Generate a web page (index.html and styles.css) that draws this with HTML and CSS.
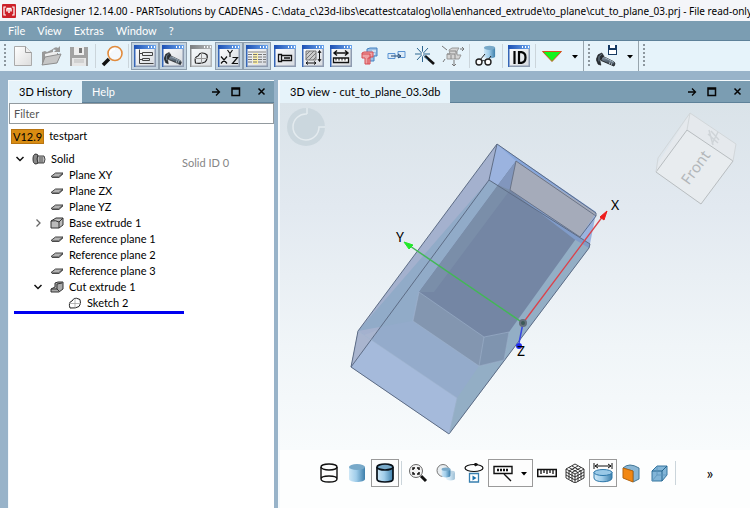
FILE: index.html
```html
<!DOCTYPE html>
<html lang="en">
<head>
<meta charset="utf-8">
<title>PARTdesigner</title>
<link rel="stylesheet" href="styles.css">
</head>
<body>
<svg class="defs" aria-hidden="true">
  <defs>
    <linearGradient id="g-page" x1="0" y1="0" x2="1" y2="1"><stop offset="0" stop-color="#fff"/><stop offset="1" stop-color="#dcdcdc"/></linearGradient>
    <linearGradient id="g-title" x1="0" y1="0" x2="1" y2="0"><stop offset="0" stop-color="#1c50b4"/><stop offset="1" stop-color="#6fa8ee"/></linearGradient>
    <linearGradient id="g-body" x1="0" y1="0" x2="1" y2="1"><stop offset="0" stop-color="#fff"/><stop offset="1" stop-color="#d5d9df"/></linearGradient>
    <linearGradient id="g-cyl" x1="0" y1="0" x2="1" y2="0"><stop offset="0" stop-color="#cfe8f7"/><stop offset=".45" stop-color="#a0cdea"/><stop offset="1" stop-color="#3d7fab"/></linearGradient>
    <linearGradient id="g-sky" x1="0" y1="0" x2="0" y2="1"><stop offset="0" stop-color="#dae3e9"/><stop offset=".3" stop-color="#e2e9f0"/><stop offset=".7" stop-color="#f0f5f8"/><stop offset="1" stop-color="#f8fbfc"/></linearGradient>
    <linearGradient id="g-bolt" x1="0" y1="0" x2="0" y2="1"><stop offset="0" stop-color="#93a3b3"/><stop offset="1" stop-color="#26303a"/></linearGradient>
    <symbol id="win" viewBox="0 0 22 22">
      <rect x=".5" y=".5" width="21" height="21" fill="url(#g-body)" stroke="#6a87b5"/>
      <path d="M0 0h22v4H0z" fill="url(#g-title)"/><path d="M0 4h1.500v18H0z" fill="#3566b8"/><path d="M20.500 4h1.500v18h-1.500zM1.500 20.500h19v1.500h-19z" fill="#8e9bb0"/>
      <path d="M14 1h1v2h-1zM17 1h1v2h-1zM20 1h1v2h-1z" fill="#fff"/>
    </symbol>
    <symbol id="bolt" viewBox="0 0 22 16">
      <path d="M6 4l13 6.500q2 2 0 4.500L5 9z" fill="url(#g-bolt)" stroke="#111" stroke-width=".8"/>
      <path d="M9 6l10 5" stroke="#a9bccb"/><path d="M15 10l-1 3M17 11l-1 3" stroke="#dce7ef" stroke-width=".7"/>
      <path d="M6 1L2 3 0 8l2 5 3 1-1-5 4-5z" fill="#2a3036" stroke="#111" stroke-width=".6"/><path d="M6 2L3 5v5" fill="none" stroke="#7b8d9b"/>
    </symbol>
    <symbol id="plane" viewBox="0 0 14 8"><path d="M1 5.500L5.500 2h7.500L8.500 6H2.500z" fill="#b2b2b2" stroke="#444"/><path d="M2 6.500h7L13 3" fill="none" stroke="#333" stroke-width=".8"/></symbol>
    <symbol id="sketch" viewBox="0 0 14 12"><path d="M2 11Q0 5 4 4L6 1.500Q8 .5 12 2.500Q13.500 7 11 9.500Q8 11.500 2 11z" fill="#fff" stroke="#222"/><path d="M1 6.500h12M7 1v10" stroke="#999" stroke-width=".7"/></symbol>
    <symbol id="cyl" viewBox="0 0 20 20"><path d="M2 4v12c0 4 16 4 16 0V4z" fill="url(#g-cyl)"/><ellipse cx="10" cy="4" rx="8" ry="3" fill="#78a9c9"/></symbol>
    <symbol id="down" viewBox="0 0 12 7"><path d="M2.500 1.500L6 5l3.500-3.500" fill="none" stroke="#111" stroke-width="1.500"/></symbol>
    <symbol id="pin" viewBox="0 0 10 10"><path d="M1 5h7M5 1.500L8.500 5 5 8.500" fill="none" stroke="#050505" stroke-width="1.300"/></symbol>
    <symbol id="max" viewBox="0 0 10 10"><path d="M1 1h7.500v7.500H1zM1 2h7.500" fill="none" stroke="#050505" stroke-width="1.500"/></symbol>
    <symbol id="close" viewBox="0 0 10 10"><path d="M1.500 1.500l6 6M7.500 1.500l-6 6" stroke="#050505" stroke-width="1.500"/></symbol>
    <symbol id="caret" viewBox="0 0 8 5"><path d="M1 1h6L4 4.500z" fill="#000"/></symbol>
  </defs>
</svg>

<div class="app">
  <header class="title">
    <svg class="logo" viewBox="0 0 14 14"><rect width="14" height="14" rx="1" fill="#cc2029"/><path d="M4 3H2v8h2M10 3h2v8h-2" fill="none" stroke="#fff" stroke-width="1.200"/><path d="M4.500 4.500h5M7 5v4M5 5v2.500M9 5v2.500" stroke="#fff" stroke-width="1.500"/></svg>
    <span>PARTdesigner 12.14.00 - PARTsolutions by CADENAS - C:\data_c\23d-libs\ecattestcatalog\olla\enhanced_extrude\to_plane\cut_to_plane_03.prj - File read-only</span>
  </header>
  <nav class="menu">
    <button>File</button><button>View</button><button>Extras</button><button>Window</button><button>?</button>
  </nav>
  <div class="toolbar">
    <i class="grip"></i>
    <button aria-label="New"><svg viewBox="0 0 22 22"><path d="M2.500 1.500h11l6 6v13h-17z" fill="url(#g-page)" stroke="#aaa"/><path d="M13.500 1.500v6h6" fill="#eee" stroke="#999"/></svg></button>
    <button aria-label="Open"><svg viewBox="0 0 22 22"><path d="M2 20V7l3-1 2 1 6-3v4h5v3z" fill="#999"/><path d="M5 9l12-3v8H5z" fill="#eee"/><path d="M2 20l3-8 16-3-4 9z" fill="#c6c6c6" stroke="#8d8d8d"/><path d="M12 5q3-4 6-2l2-2v6h-6l2-2q-2-1-4 0z" fill="#999"/></svg></button>
    <button aria-label="Save"><svg viewBox="0 0 22 22"><path d="M2 2h18v19H2z" fill="#a2a2a2"/><path d="M6 2h10v8H6z" fill="#eee"/><path d="M11 3h3v5h-3z" fill="#777"/><path d="M4 13h14v8H4z" fill="#e6e6e6"/><path d="M6 15h10M6 17h10" stroke="#bbb"/></svg></button>
    <i class="sep"></i>
    <button aria-label="Search"><svg viewBox="0 0 22 22"><path d="M2 20l6-6" stroke="#111" stroke-width="3.500"/><path d="M8 14l2-2" stroke="#aaa" stroke-width="2"/><circle cx="14" cy="8.500" r="7" fill="#f4f8fc" stroke="#e18b3c" stroke-width="1.600"/><path d="M9 8q1-4 5-4" fill="none" stroke="#fff" stroke-width="2"/></svg></button>
    <i class="sep"></i>
    <button class="on" aria-label="History"><svg viewBox="0 0 22 22"><use href="#win"/><path d="M5.500 4.500v14h14M5.500 8.500h3M5.500 14.500h3M8.500 7.500h10v3h-10zM8.500 13.500h7v2h-7z" fill="none" stroke="#444"/></svg></button>
    <button class="on" aria-label="3D view"><svg viewBox="0 0 22 22"><use href="#win"/><use href="#bolt" x="2" y="6" width="19" height="15"/></svg></button>
    <button aria-label="Sketch"><svg viewBox="0 0 22 22"><g class="mono"><use href="#win"/></g><path d="M5.500 18Q4 12 8 11L10 8.500Q14 7 17 10Q18 14 15 17Q11 19 5.500 18z" fill="none" stroke="#222" stroke-width="1.200"/><path d="M5 13.500h13M11.500 7v12" stroke="#999"/></svg></button>
    <button class="on" aria-label="Variables"><svg viewBox="0 0 22 22"><use href="#win"/><path d="M3 11.500l6 7M9 11.500l-6 7M9.500 5l2.500 3.500L14.500 5M12 8v4M14.500 12.500h5l-5 6h5.500" fill="none" stroke="#111" stroke-width="1.200"/></svg></button>
    <button class="on" aria-label="Table"><svg viewBox="0 0 22 22"><use href="#win"/><path d="M7 8h5v11H7z" fill="#fff2a8"/><path d="M2 6h18v2H2z" fill="#bbb"/><path d="M2 9.500h18M2 12h18M2 14.500h18M2 17h18" stroke="#777" stroke-dasharray="4 1"/></svg></button>
    <button aria-label="Part"><svg viewBox="0 0 22 22"><use href="#win"/><path d="M4.500 9.500h3v7h-3zM7.500 10.500h10v5h-10zM10 13h6" fill="none" stroke="#111" stroke-width="1.300"/></svg></button>
    <button aria-label="Section"><svg viewBox="0 0 22 22"><use href="#win"/><path d="M4 6h10v9H4z" fill="#ccc" stroke="#777"/><path d="M4 10l4-4M4 14l8-8M7 15l7-7M11 15l3-3" stroke="#777"/><path d="M17.500 6v10M16 8l1.500-2.500L19 8M16 14l1.500 2.500L19 14M4 18h10M6 16.500L4 18l2 1.500M12 16.500l2 1.500-2 1.500" fill="none" stroke="#111"/></svg></button>
    <button aria-label="Measure"><svg viewBox="0 0 22 22"><use href="#win"/><path d="M4 8h14M7 5.500L4 8l3 2.500M15 5.500L18 8l-3 2.500" fill="none" stroke="#111" stroke-width="1.400"/><path d="M3.500 13h15v4.500h-15z" fill="#fff" stroke="#111" stroke-width="1.300"/><path d="M6 13v2.500M9 13v2.500M12 13v2.500M15 13v2.500" stroke="#111"/></svg></button>
    <button aria-label="Combine"><svg viewBox="0 0 22 22"><path d="M9 4l3-1h7v8h-3v5H9z" fill="#9cc0e4" stroke="#4481c2"/><path d="M14 6h4M13 9h4" stroke="#fff"/><path d="M4 8l2-1h9v5h-3v7H7v-6H4z" fill="#eda2a5" stroke="#d74a50"/><path d="M4 9h8v4h-2v6" fill="none" stroke="#d74a50"/></svg></button>
    <button aria-label="Connect"><svg viewBox="0 0 22 22"><path d="M2 8.500h7v5H2zM12 6.500h7v6h-7z" fill="#dcebf8" stroke="#5a93d2"/><path d="M5 11h10M12 9l3 2-3 2" fill="none" stroke="#25466c"/></svg></button>
    <button aria-label="Wizard"><svg viewBox="0 0 22 22"><path d="M11 11l9 8" stroke="#111" stroke-width="2.600"/><path d="M8.500 1v16M1 9h15M3 3l11 12M14 3L3 15" stroke="#2d6690"/><path d="M8.500 6l1 3-1 3-1-3z" fill="#fff"/></svg></button>
    <button aria-label="Assembly"><svg viewBox="0 0 22 22"><path d="M7 5l3-2h7l-2 3v4h4l-2 4H5V9h3z" fill="#d5d5d5" stroke="#999"/><path d="M5 9h8v5M8 6h6v3M9 10v4" fill="none" stroke="#888"/><path d="M0 1l5 4M18 4h4M12 15v6M20 2l2 2-2 2M10 19l2 2 2-2M3 14l-2 3" fill="none" stroke="#777"/></svg></button>
    <i class="sep"></i>
    <button aria-label="Inspect"><svg viewBox="0 0 22 22"><use href="#cyl" x="7" y="0" width="15" height="14"/><path d="M5 15l5-6M13 15l3-4" stroke="#222"/><circle cx="4" cy="17" r="3" fill="#fff" stroke="#222" stroke-width="1.400"/><circle cx="13" cy="17" r="3" fill="#fff" stroke="#222" stroke-width="1.400"/><path d="M7 16q1.500-1 3 0" fill="none" stroke="#222"/></svg></button>
    <i class="sep"></i>
    <button aria-label="ID"><svg viewBox="0 0 22 22"><use href="#win"/><path d="M6.500 6v13M11 7.200v10.600h2.500q4-.5 4-5.300t-4-5.300z" fill="none" stroke="#050505" stroke-width="2.200"/></svg></button>
    <i class="sep"></i>
    <button aria-label="Update"><svg viewBox="0 0 22 22"><path d="M1.500 6.500h19L11 16.500z" fill="#13f51b" stroke="#d9501d"/></svg></button>
    <button class="drop" aria-label="Update options"><svg class="caret"><use href="#caret"/></svg></button>
    <i class="rule"></i><i class="grip"></i>
    <button aria-label="Save part"><svg viewBox="0 0 22 22"><use href="#bolt" x="0" y="7" width="21" height="15"/><path d="M12 0h9v10h-9z" fill="#173a62"/><path d="M14 0h5v3h-5zM13 5h7v4h-7z" fill="#fff"/></svg></button>
    <button class="drop" aria-label="Save options"><svg class="caret"><use href="#caret"/></svg></button>
    <i class="rule"></i><i class="grip"></i>
  </div>

  <main class="docks">
    <section class="dock history">
      <div class="tabs">
        <button class="tab active">3D History</button><button class="tab">Help</button>
        <span class="ctl"><button aria-label="Pin"><svg><use href="#pin"/></svg></button><button aria-label="Maximize"><svg><use href="#max"/></svg></button><button class="far" aria-label="Close"><svg><use href="#close"/></svg></button></span>
      </div>
      <input class="filter" type="text" placeholder="Filter" aria-label="Filter">
      <p class="part"><b>V12.9</b>testpart</p>
      <div class="solid">
        <ul class="tree">
          <li><svg class="arrow"><use href="#down"/></svg><svg class="ico" viewBox="0 0 14 12"><path d="M5 3h7q2 3 0 7H5z" fill="#bbb" stroke="#444"/><path d="M8 4v6M10 4v6" stroke="#555"/><path d="M4 1Q1 1 1 6t3 5l2-1Q4 6 6 2z" fill="#888" stroke="#333"/></svg>Solid</li>
          <li class="l2"><svg class="ico"><use href="#plane"/></svg>Plane XY</li>
          <li class="l2"><svg class="ico"><use href="#plane"/></svg>Plane ZX</li>
          <li class="l2"><svg class="ico"><use href="#plane"/></svg>Plane YZ</li>
          <li class="l1"><svg class="arrow" viewBox="0 0 12 8"><path d="M4.500 .5L8 4 4.500 7.500" fill="none" stroke="#666" stroke-width="1.300"/></svg><svg class="ico" viewBox="0 0 14 12"><path d="M1 4l5-3h7v7l-4 3H1z" fill="#bbb" stroke="#333"/><path d="M1 4q5-1 8 1l4-4M9 5v6" fill="none" stroke="#333"/></svg>Base extrude 1</li>
          <li class="l2"><svg class="ico"><use href="#plane"/></svg>Reference plane 1</li>
          <li class="l2"><svg class="ico"><use href="#plane"/></svg>Reference plane 2</li>
          <li class="l2"><svg class="ico"><use href="#plane"/></svg>Reference plane 3</li>
          <li class="l1"><svg class="arrow"><use href="#down"/></svg><svg class="ico" viewBox="0 0 14 12"><path d="M1 8l4-2V2l3-1h5v7l-4 3H1z" fill="#aaa" stroke="#333"/><path d="M1 8h6V3l5-1M7 8l2 2" fill="none" stroke="#333"/></svg>Cut extrude 1</li>
          <li class="l3"><svg class="ico"><use href="#sketch"/></svg>Sketch 2</li>
        </ul>
        <span class="sid">Solid ID 0</span>
      </div>
    </section>

    <section class="dock view">
      <div class="tabs">
        <button class="tab active">3D view - cut_to_plane_03.3db</button>
        <span class="ctl"><button aria-label="Pin"><svg><use href="#pin"/></svg></button><button aria-label="Maximize"><svg><use href="#max"/></svg></button><button class="far" aria-label="Close"><svg><use href="#close"/></svg></button></span>
      </div>
      <svg class="scene" viewBox="280 103 470 347" preserveAspectRatio="xMidYMid slice">
        <rect x="0" y="103" width="1200" height="347" fill="url(#g-sky)"/>
        <circle cx="306" cy="127" r="19" fill="#cbd7de"/><path d="M307 114a13 13 0 1 0 12 13h6M307 108v6" fill="none" stroke="#e4ebef" stroke-width="1.500"/>
        <path d="M690 113l46 31-3 17-32 43-45-32 2-9z" fill="#e5e9ed"/><path d="M687 130l46 31-32 43-45-32z" fill="#e8ecef" stroke="#b8bdc0"/><path d="M687 130l3-17 46 31-3 17M690 113l-32 45-2 14" fill="none" stroke="#d2d7da"/><path d="M708 134l10 9M709 130l4 15M718 132l-6 12M711 131l8 9" stroke="#cfd4d8" stroke-width="1.500"/>
        <text class="front" transform="translate(695 167) rotate(-54)" text-anchor="middle" y="6">Front</text>
        <path d="M497 144l-139 187-7 36L489 180z" fill="#a4b1ce"/>
        <path d="M497 144l99 69-6 31-101-64z" fill="#9bb3df"/>
        <path d="M489 180l101 64-1 4-140 186-98-67z" fill="#94abcb"/>
        <path d="M498 185l-80 107-6 29-54 10L489 180z" fill="#91abc8"/>
        <path d="M358 331l99 67-8 36-98-67z" fill="#a5badb"/><path d="M358 331l-7 36 27-37-14 5z" fill="#a9b5cf"/>
        <path d="M590 244l-1 4-140 186 8-36 22-32 25-6 5-28 69-97z" fill="#93aec5"/>
        <path d="M419 292l90 40-5 28-25 6-66-45z" fill="#8396b0"/><path d="M484 337l25-5-5 28-25 6z" fill="#7f94af"/>
        <path d="M419 292l97-131-6 29 68 46-69 96-25 5z" fill="#7486a4"/>
        <path d="M419 292l79-107 18-24-6 29-76 102z" fill="#7a8ea9"/><path d="M498 185l18-24-6 29z" fill="#8196bd"/>
        <path d="M516 161l80 52-16 24-70-47z" fill="#a5abba"/>
        <path d="M516 161l80 52v-1l-99-68z" fill="#87a7dc"/>
        <path d="M510 190l80 54-1 4-15-9z" fill="#809bc8"/>
        <path d="M497 144l99 69v3l-16 21M497 144L358 331l-7 36L489 180l8-36M489 180l101 64-1 4-140 186-98-67" fill="none" stroke="#5d6c85"/>
        <path d="M516 161l80 55M516 161l-6 29 70 47" fill="none" stroke="#6a7488"/>
        <path d="M419 292l65 45 25-5-5 28-25 6-66-45zM484 337l-5 29M457 398l-8 36M358 331l99 67" fill="none" stroke="#a0b4cd" stroke-opacity=".55"/>
        <path d="M523 323l80-107" stroke="#db424b" stroke-width="1.300"/><path d="M607 211l-3 9-4-3z" fill="#ee1c1c" stroke="#ee1c1c"/>
        <path d="M523 323L410 246" stroke="#43b756" stroke-width="1.500"/><path d="M404 242l9 3-4 4z" fill="#21e829" stroke="#21e829"/>
        <path d="M523 323l-4 20" stroke="#3848e2" stroke-width="1.500"/><circle cx="519" cy="346" r="3" fill="#1f2df0"/>
        <circle cx="523" cy="323" r="4" fill="#64707c"/><circle cx="523" cy="323" r="2" fill="#3c5a58"/>
        <g class="axis" text-anchor="middle"><text x="615" y="210">X</text><text x="400" y="242">Y</text><text x="521" y="356">Z</text></g>
      </svg>
      <div class="viewbar">
        <button aria-label="Wireframe"><svg viewBox="0 0 20 20"><path d="M2 4v12c0 4 16 4 16 0V4M2 16c0-4 16-4 16 0" fill="none" stroke="#111" stroke-width="1.400"/><ellipse cx="10" cy="4" rx="8" ry="3" fill="none" stroke="#111" stroke-width="1.400"/></svg></button>
        <button aria-label="Shaded"><svg><use href="#cyl"/></svg></button>
        <button class="box" aria-label="Shaded with edges"><svg viewBox="0 0 20 20"><use href="#cyl"/><path d="M2 4v12c0 4 16 4 16 0V4" fill="none" stroke="#081018" stroke-width="1.700"/><ellipse cx="10" cy="4" rx="8" ry="3" fill="none" stroke="#081018" stroke-width="1.700"/></svg></button>
        <i class="sep"></i>
        <button aria-label="Zoom fit"><svg viewBox="0 0 20 20"><path d="M13 13l5 5" stroke="#111" stroke-width="3"/><circle cx="8" cy="8" r="6.500" fill="#f4f4f4" stroke="#666"/><path d="M5 7V5h2M9 5h2v2M11 9v2H9M7 11H5V9" fill="none" stroke="#111" stroke-width="1.500"/></svg></button>
        <button aria-label="Transparency"><svg viewBox="0 0 20 20"><use href="#cyl" x="9" y="6" width="11" height="13" opacity=".5"/><circle cx="7" cy="7.500" r="6" fill="#e8edf0" stroke="#777"/><use href="#cyl" x="4" y="4" width="12" height="11"/></svg></button>
        <button aria-label="Rotate"><svg viewBox="0 0 20 20"><ellipse cx="10" cy="5" rx="9" ry="3.500" fill="none" stroke="#111" stroke-width="1.200"/><path d="M11 0l3 1.500L11 3z" fill="#111" stroke="#111"/><path d="M5.500 10.500h9v8.500h-9z" fill="#fff" stroke="#377faf" stroke-width="1.300"/><path d="M8.500 12.500l4 2.500-4 2.500z" fill="#1870ad"/></svg></button>
        <button class="box wide" aria-label="Labels"><svg viewBox="0 0 20 20"><path d="M1 3.500h18v7H1z" fill="#fff" stroke="#111" stroke-width="1.400"/><path d="M4 7h12" stroke="#111" stroke-width="2.500" stroke-dasharray="2 1"/><path d="M11 11l7 7" stroke="#111" stroke-width="1.300"/></svg><svg class="caret"><use href="#caret"/></svg></button>
        <button aria-label="Ruler"><svg viewBox="0 0 20 20"><path d="M.7 6.500h18.600v7H.7z" fill="#fff" stroke="#111" stroke-width="1.600"/><path d="M4 7v4M7 7v3M10 7v4M13 7v3M16 7v4" stroke="#111" stroke-width="1.300"/></svg></button>
        <button aria-label="Mesh"><svg viewBox="0 0 20 20"><path d="M10 1l9 5v9l-9 5-9-5V6zM1 6l9 5 9-5M10 11v9M4 4.500l9 5v9M7 3l9 5v8M16 4.500l-9 5v9M13 3L4 8v8M1 9l9 5 9-5M1 12l9 5 9-5" fill="none" stroke="#222" stroke-width=".9"/></svg></button>
        <button class="box" aria-label="Dimensions"><svg viewBox="0 0 20 20"><path d="M1 9v6c0 5 18 5 18 0V9z" fill="url(#g-cyl)" stroke="#2e78aa"/><ellipse cx="10" cy="9.500" rx="9" ry="3" fill="#9ac9e7" stroke="#2e78aa"/><path d="M1 0v6M19 0v6M2 3h16M5 1L2 3l3 2M15 1l3 2-3 2" fill="none" stroke="#111"/></svg></button>
        <button aria-label="Section view"><svg viewBox="0 0 20 20"><path d="M2 5q6-6 16 0v11l-6 3V8z" fill="#8ab6d4" stroke="#427797"/><path d="M2 5l10 3v11L2 15z" fill="#f28712" stroke="#b4640e"/></svg></button>
        <button aria-label="Box view"><svg viewBox="0 0 20 20"><path d="M3 8l5-5h10v9l-5 6H3z" fill="#82b5d7" stroke="#34749e"/><path d="M3 8h10v10M13 8l5-5" fill="none" stroke="#25648e"/><path d="M3 18l5-6h10M8 12V3" fill="none" stroke="#5d96bb" stroke-width=".8"/></svg></button>
        <i class="sep"></i>
        <button class="more" aria-label="More">»</button>
      </div>
    </section>
  </main>
</div>
</body>
</html>
```
FILE: styles.css
```css
* { box-sizing: border-box; }
body { margin: 0; font: 11px/16px Lato, "Noto Sans", sans-serif; color: #000; }
button { font: inherit; color: inherit; padding: 0; border: 0; background: none; }
svg { display: block; flex: none; }
.defs { position: absolute; width: 0; height: 0; }
.app { display: flex; flex-direction: column; height: 100vh; overflow: hidden; background: #98b3c9; }
.title { display: flex; flex: none; align-items: center; gap: 5px; height: 21px; padding-left: 2px; background: #f4f5f9; font-family: "Noto Sans", sans-serif; font-size: 10px; white-space: nowrap; overflow: hidden; }
.logo { width: 14px; height: 14px; }
.menu { display: flex; flex: none; gap: 12px; height: 20px; padding-left: 8px; background: #7b9db2; border-bottom: 1px solid #5e8199; color: #fff; }
.toolbar { display: flex; flex: none; align-items: center; height: 30px; background: #e6f3fa; }
.toolbar button { display: flex; flex: none; align-items: center; justify-content: center; width: 28px; height: 28px; }
.toolbar button > svg { width: 22px; height: 22px; }
.toolbar .on { background: #c3d3e0; border: 1px solid #8f9fae; }
.toolbar .drop { width: 17px; }
.toolbar button > .caret { width: 8px; height: 5px; }
.mono { filter: grayscale(1) opacity(.7); }
.grip { flex: none; width: 2px; height: 24px; margin: 0 3px 0 4px; background: repeating-linear-gradient(#8d979e 0 2px, transparent 2px 4px); }
.sep { flex: none; width: 1px; height: 24px; margin: 0 2px; background: #cbd5db; }
.rule { flex: none; width: 1px; height: 30px; background: #98a5ad; }
.docks { display: flex; flex: 1; min-height: 0; gap: 4px; padding: 9px 0 0 8px; }
.dock { display: flex; flex-direction: column; border: solid #f4f9fc; border-width: 1px 0 0 1px; min-width: 0; }
.history { flex: 0 0 266px; background: #fff; }
.view { flex: 1; border-left-width: 2px; background: #fdfefe; }
.tabs { display: flex; flex: none; height: 22px; background: #7b9db2; border-bottom: 1px solid #5e8199; }
.tab { height: 22px; padding: 0 10px; color: #fff; }
.tab.active { background: #e6f3fa; color: #000; }
.ctl { display: flex; align-items: center; gap: 10px; margin-left: auto; padding-right: 7px; }
.ctl svg { width: 10px; height: 10px; }
.ctl .far { margin-left: 6px; }
.filter { flex: none; height: 21px; padding: 0 4px; border: 1px solid #929a9f; font: inherit; background: #fff; }
.filter::placeholder { color: #555; opacity: 1; }
.part { display: flex; align-items: center; gap: 5px; margin: 4px 2px 7px; }
.part b { padding: 0 1px; border: 1px solid #b87410; background: #d88c12; font-weight: 400; line-height: 13px; }
.solid { display: flex; }
.tree { width: 170px; margin: 0 0 0 5px; padding: 0; border-bottom: 3px solid #0000f0; list-style: none; flex: none; }
.tree li { display: flex; align-items: center; height: 16px; white-space: nowrap; }
.arrow { width: 12px; height: 8px; margin-right: 6px; }
.ico { width: 14px; height: 12px; margin-right: 5px; }
.tree .l1 { padding-left: 18px; }
.tree .l2 { padding-left: 36px; }
.tree .l3 { padding-left: 54px; }
.sid { margin: 4px 0 0 -2px; color: #858585; white-space: nowrap; }
.scene { flex: 1; width: 100%; min-height: 0; }
.front { font: 15px "Noto Sans", sans-serif; fill: #b3b7ba; }
.axis { font: 14px "Noto Sans", sans-serif; }
.viewbar { display: flex; flex: none; align-items: center; height: 58px; padding: 0 0 12px 35px; }
.viewbar button { display: flex; flex: none; align-items: center; justify-content: center; width: 28px; height: 28px; }
.viewbar button > svg { width: 20px; height: 20px; }
.viewbar button > .caret { width: 8px; height: 5px; }
.viewbar .box { border: 1px solid #9a9a9a; background: #fdfdfd; }
.viewbar .wide { width: 45px; gap: 7px; }
.viewbar .more { margin-left: 18px; font-size: 16px; }
```
